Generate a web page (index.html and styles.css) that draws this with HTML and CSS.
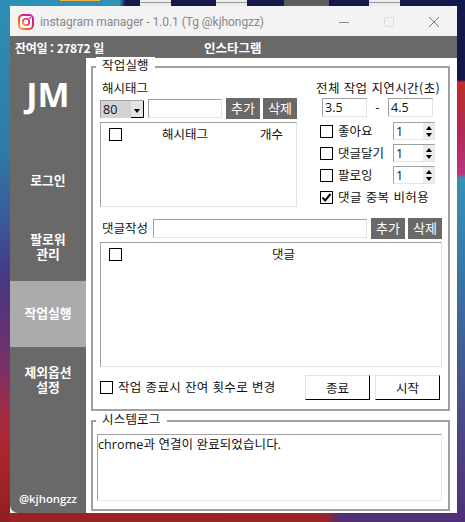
FILE: index.html
```html
<!DOCTYPE html>
<html lang="ko">
<head>
<meta charset="utf-8">
<title>instagram manager</title>
<link rel="stylesheet" href="styles.css">
</head>
<body>
<div class="desk">
  <span class="desk-sun"></span>
  <span class="desk-tab tab-a"></span>
  <span class="desk-tab tab-b"></span>
  <span class="desk-dark"></span>
  <span class="desk-tab tab-c"></span>
</div>
<div class="window">
  <header class="titlebar">
    <svg class="app-icon" width="16" height="16" viewBox="0 0 16 16">
      <defs>
        <linearGradient id="ig" x1="0" y1="1" x2="1" y2="0">
          <stop offset="0" stop-color="#fdb02c"/>
          <stop offset="0.45" stop-color="#f0343c"/>
          <stop offset="1" stop-color="#c414b8"/>
        </linearGradient>
      </defs>
      <rect x="1" y="1" width="14" height="14" rx="4" fill="#fff" stroke="url(#ig)" stroke-width="2"/>
      <circle cx="8" cy="8" r="3.2" fill="none" stroke="url(#ig)" stroke-width="1.6"/>
      <circle cx="12" cy="4" r="1" fill="#d0208c"/>
    </svg>
    <span class="app-title">instagram manager - 1.0.1 (Tg @kjhongzz)</span>
    <div class="win-controls">
      <svg width="12" height="12" viewBox="0 0 12 12"><path d="M1 6.5H11" stroke="#8a8a8a" fill="none"/></svg>
      <svg width="12" height="12" viewBox="0 0 12 12"><rect x="1.5" y="1.5" width="9" height="9" rx="1" stroke="#dcdcdc" fill="none"/></svg>
      <svg width="12" height="12" viewBox="0 0 12 12"><path d="M1 1L11 11M11 1L1 11" stroke="#777" fill="none"/></svg>
    </div>
  </header>
  <div class="infobar">
    <span class="days">잔여일 : 27872 일</span>
    <span class="brand">인스타그램</span>
  </div>
  <div class="body">
    <nav class="sidebar">
      <div class="logo">JM</div>
      <a class="nav-item">로그인</a>
      <a class="nav-item">팔로워<br>관리</a>
      <a class="nav-item active">작업실행</a>
      <a class="nav-item">제외옵션<br>설정</a>
      <div class="handle">@kjhongzz</div>
    </nav>
    <main class="main">
      <section class="group group-run">
        <span class="legend">작업실행</span>
        <div class="top-cols">
          <div class="col-left">
            <div class="label tag-label">해시태그</div>
            <div class="tag-row">
              <div class="select"><span>80</span><i class="select-btn"><b class="tri-down"></b></i></div>
              <div class="field tag-input"></div>
              <div class="btn-dark">추가</div>
              <div class="btn-dark">삭제</div>
            </div>
            <div class="list list-tags">
              <span class="check"></span>
              <span class="head head-tag">해시태그</span>
              <span class="head head-count">개수</span>
            </div>
          </div>
          <div class="col-right">
            <div class="label delay-title">전체 작업 지연시간(초)</div>
            <div class="delay-row">
              <div class="field num">3.5</div>
              <span class="dash">-</span>
              <div class="field num">4.5</div>
            </div>
            <div class="opt"><span class="check"></span><span class="opt-text">좋아요</span><div class="spin"><span>1</span><i class="spin-btns"><b class="tri-up"></b><b class="tri-down"></b></i></div></div>
            <div class="opt"><span class="check"></span><span class="opt-text">댓글달기</span><div class="spin"><span>1</span><i class="spin-btns"><b class="tri-up"></b><b class="tri-down"></b></i></div></div>
            <div class="opt"><span class="check"></span><span class="opt-text">팔로잉</span><div class="spin"><span>1</span><i class="spin-btns"><b class="tri-up"></b><b class="tri-down"></b></i></div></div>
            <div class="opt"><span class="check checked"><svg width="11" height="11" viewBox="0 0 11 11"><path d="M1.5 5.5L4.2 8.5L9.5 2" fill="none" stroke="#000" stroke-width="2"/></svg></span><span class="opt-text wide">댓글 중복 비허용</span></div>
          </div>
        </div>
        <div class="comment-row">
          <span class="label comment-label">댓글작성</span>
          <div class="field comment-input"></div>
          <div class="btn-dark">추가</div>
          <div class="btn-dark">삭제</div>
        </div>
        <div class="list list-comments">
          <span class="check"></span>
          <span class="head head-comment">댓글</span>
        </div>
        <div class="action-row">
          <span class="check"></span>
          <span class="action-text">작업 종료시 잔여 횟수로 변경</span>
          <div class="btn-light stop">종료</div>
          <div class="btn-light">시작</div>
        </div>
      </section>
      <section class="group group-log">
        <span class="legend">시스템로그</span>
        <div class="log">chrome과 연결이 완료되었습니다.</div>
      </section>
    </main>
  </div>
</div>
</body>
</html>
```
FILE: styles.css
```css
* { box-sizing: border-box; }
html, body { margin: 0; padding: 0; }
body {
  width: 465px;
  height: 522px;
  overflow: hidden;
  font-family: "Noto Sans CJK KR", "Noto Sans", sans-serif;
  font-size: 12.5px;
  color: #111;
  background:
    linear-gradient(to bottom, #2c8fb5 0, #2f7aa8 150px, #3a5a98 220px, #453a88 270px, #56347a 310px, #7c3066 370px, #a82a3c 420px, #a82428 470px, #8e1e22 522px) 0 0 / 10px 522px no-repeat,
    linear-gradient(to bottom, #15184a 0, #15184a 80px, #c42a2a 82px, #b02a50 130px, #bc357e 174px, #3494b6 178px, #3a74a4 280px, #45558f 380px, #50357a 500px, #4f2f75 522px) 457px 0 / 8px 522px no-repeat,
    linear-gradient(to right, #9c2024 0, #9e2226 325px, #4f2f75 340px, #4f2f75 100%) 0 513px / 465px 9px no-repeat;
}

/* desktop behind the window */
.desk {
  height: 6px;
  display: flex;
  background: linear-gradient(100deg, #2c8fb5 0, #2f95b8 118px, #15184a 124px);
}
.desk-sun { width: 40px; height: 1px; margin-left: 60px; background: #f2b038; }
.desk-tab {
  width: 31px;
  height: 6px;
  background: linear-gradient(to bottom, #ececec 2px, #9a9a9a 2px, #9a9a9a 3px, #ececec 3px);
}
.tab-a { margin-left: 40px; }
.tab-b { margin-left: 45px; }
.desk-dark { width: 45px; margin-left: 37px; background: #5c5c5c; }
.tab-c { margin-left: 40px; }

/* window */
.window {
  width: 447px;
  height: 507px;
  margin-left: 10px;
  display: flex;
  flex-direction: column;
  border-radius: 8px;
  overflow: hidden;
  background: #fff;
}
.titlebar {
  height: 30px;
  flex: none;
  display: flex;
  align-items: center;
  padding-left: 8px;
  background: #f3f3f3;
}
.app-icon { flex: none; margin-top: 2px; }
.app-title {
  margin-left: 6px;
  margin-top: 2px;
  font-family: Roboto, sans-serif;
  font-size: 12px;
  letter-spacing: -0.05px;
  color: #888;
  white-space: nowrap;
}
.win-controls {
  margin-left: auto;
  margin-right: 17px;
  margin-top: 1px;
  display: flex;
  gap: 33px;
}
.infobar {
  height: 22px;
  flex: none;
  display: flex;
  align-items: center;
  background: #696969;
  color: #fff;
  font-weight: 700;
  font-size: 12px;
  padding-left: 5px;
}
.days { width: 189px; white-space: nowrap; letter-spacing: -0.35px; }
.brand { white-space: nowrap; font-size: 12.5px; }
.body { flex: 1; display: flex; min-height: 0; }

/* sidebar */
.sidebar {
  width: 76px;
  flex: none;
  display: flex;
  flex-direction: column;
  background: #696969;
  color: #fff;
  font-weight: 700;
  font-size: 12.8px;
  line-height: 15px;
  text-align: center;
}
.logo {
  height: 89px;
  padding-top: 14px;
  font-family: "Open Sans", sans-serif;
  font-size: 34px;
  line-height: 44px;
}
.nav-item {
  height: 67px;
  padding-bottom: 3px;
  display: flex;
  align-items: center;
  justify-content: center;
}
.nav-item.active { height: 66px; padding-bottom: 4px; background: #ababab; }
.handle {
  margin-top: auto;
  padding-bottom: 7px;
  font-family: "Open Sans", sans-serif;
  font-weight: 600;
  font-size: 11.3px;
}

/* main */
.main {
  flex: 1;
  display: flex;
  flex-direction: column;
  gap: 9px;
  padding: 8px 7px 0 5px;
}
.group {
  position: relative;
  border: 2px solid #a0a0a0;
  padding: 12px 6px 0 7px;
}
.group-run { height: 345px; }
.group-log { height: 91px; padding: 12px 6px 0 4px; }
.legend {
  position: absolute;
  left: 3px;
  top: -11px;
  padding: 0 6px;
  line-height: 16px;
  background: #fff;
  white-space: nowrap;
  letter-spacing: 0.2px;
}
.label { line-height: 16px; white-space: nowrap; }
.tag-label { padding-left: 2px; }
.top-cols { display: flex; gap: 19px; }
.col-left { width: 197px; }
.col-right { width: 126px; }
.tag-row {
  margin-top: 2px;
  height: 21px;
  display: flex;
  align-items: center;
}
.select {
  width: 44px;
  height: 18px;
  display: flex;
  align-items: center;
  justify-content: space-between;
  padding-left: 2px;
  background: #d3d3d3;
  border-top: 1px solid #a0a0a0;
  border-left: 1px solid #a0a0a0;
  font-family: "Open Sans", sans-serif;
  font-size: 12.5px;
}
.select-btn {
  width: 13px;
  height: 17px;
  display: flex;
  align-items: center;
  justify-content: center;
  padding-top: 4px;
  background: #e4e4e4;
  border-right: 1px solid #000;
  border-bottom: 1px solid #000;
}
.tri-down, .tri-up {
  display: block;
  width: 0;
  height: 0;
  border-left: 3.5px solid transparent;
  border-right: 3.5px solid transparent;
}
.tri-down { border-top: 4px solid #000; }
.tri-up { border-bottom: 4px solid #000; }
.field {
  height: 19px;
  background: #fff;
  border: 1px solid #e3e3e3;
  border-top: 1px solid #a0a0a0;
  border-left: 1px solid #a0a0a0;
  font-family: "Open Sans", sans-serif;
  font-size: 12.5px;
  line-height: 17px;
  padding-left: 2px;
}
.tag-input { width: 74px; margin: 0 4px; }
.btn-dark {
  width: 34px;
  height: 21px;
  flex: none;
  padding-bottom: 2px;
  display: flex;
  align-items: center;
  justify-content: center;
  background: #696969;
  color: #fff;
  font-size: 13px;
}
.btn-dark + .btn-dark { margin-left: 3px; }
.list {
  position: relative;
  margin-top: 3px;
  background: #fff;
  border: 1px solid #e3e3e3;
  border-top: 1px solid #a0a0a0;
  border-left: 1px solid #a0a0a0;
  display: flex;
  align-items: flex-start;
  padding: 5px 0 0 8px;
}
.list-tags { height: 85px; }
.list-comments { height: 125px; }
.check {
  width: 13px;
  height: 13px;
  flex: none;
  display: flex;
  align-items: center;
  justify-content: center;
  border: 1px solid #000;
  background: #fff;
}
.head { line-height: 11px; white-space: nowrap; }
.head-tag { margin-left: 40px; }
.head-count { margin-left: 52px; }
.head-comment { margin-left: 150px; }

/* right column */
.delay-title { letter-spacing: 0.4px; }
.delay-row {
  margin-top: 2px;
  margin-left: 6px;
  display: flex;
  align-items: center;
}
.num { width: 45px; }
.dash { width: 21px; text-align: center; }
.opt {
  height: 22px;
  margin-left: 4px;
  display: flex;
  align-items: center;
  white-space: nowrap;
}
.delay-row + .opt { margin-top: 3px; }
.opt-text { margin-left: 5px; padding-bottom: 2px; }
.opt-text.wide { letter-spacing: 0.4px; }
.spin {
  margin-left: auto;
  margin-right: 7px;
  width: 42px;
  height: 18px;
  display: flex;
  align-items: center;
  justify-content: space-between;
  padding-left: 2px;
  background: #fff;
  border: 1px solid #e3e3e3;
  border-top: 1px solid #a0a0a0;
  border-left: 1px solid #a0a0a0;
  font-family: "Open Sans", sans-serif;
  font-size: 12.5px;
}
.spin-btns {
  width: 11px;
  height: 16px;
  display: flex;
  flex-direction: column;
  align-items: center;
  justify-content: center;
  gap: 3px;
  background: #ededed;
}

/* lower rows */
.comment-row {
  margin-top: 10px;
  height: 21px;
  display: flex;
  align-items: center;
}
.comment-label { width: 53px; padding-left: 2px; padding-bottom: 2px; }
.comment-input { width: 214px; margin-right: 4px; }
.action-row {
  margin-top: 8px;
  height: 25px;
  display: flex;
  align-items: center;
}
.action-text { width: 159px; margin-left: 5px; padding-bottom: 2px; white-space: nowrap; letter-spacing: 0.35px; }
.btn-light {
  width: 65px;
  height: 25px;
  display: flex;
  align-items: center;
  justify-content: center;
  background: #fff;
  border: 1px solid #e3e3e3;
  border-right: 1px solid #000;
  border-bottom: 1px solid #000;
}
.stop { margin-left: 28px; margin-right: 5px; }
.log {
  height: 67px;
  background: #fff;
  border: 1px solid #e8e8e8;
  border-top: 1px solid #a0a0a0;
  border-left: 1px solid #a0a0a0;
  line-height: 15px;
  padding: 2px 0 0 0;
  font-family: "Open Sans", "Noto Sans CJK KR", sans-serif;
  font-size: 12.5px;
  letter-spacing: 0.1px;
}
```
